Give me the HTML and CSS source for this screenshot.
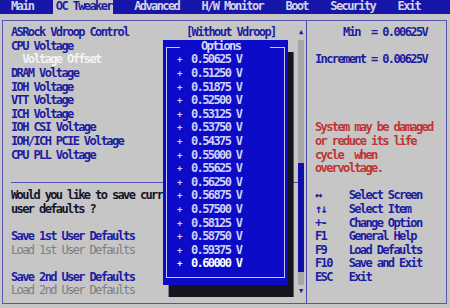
FILE: index.html
```html
<!DOCTYPE html>
<html>
<head>
<meta charset="utf-8">
<link rel="stylesheet" href="styles.css">
</head>
<body>
<div class="screen">
  <nav class="tabs">
    <span class="tab">Main</span>
    <span class="tab active">OC Tweaker</span>
    <span class="tab">Advanced</span>
    <span class="tab">H/W Monitor</span>
    <span class="tab">Boot</span>
    <span class="tab">Security</span>
    <span class="tab">Exit</span>
  </nav>
  <div class="frame">
    <div class="left">
      <div class="list">
        <div class="row item"><span class="label">ASRock Vdroop Control</span><span>[Without Vdroop]</span></div>
        <div class="row item">CPU Voltage</div>
        <div class="row sel">  Voltage Offset</div>
        <div class="row item">DRAM Voltage</div>
        <div class="row item">IOH Voltage</div>
        <div class="row item">VTT Voltage</div>
        <div class="row item">ICH Voltage</div>
        <div class="row item">IOH CSI Voltage</div>
        <div class="row item">IOH/ICH PCIE Voltage</div>
        <div class="row item">CPU PLL Voltage</div>
        <div class="row"></div>
        <div class="row sep"></div>
        <div class="row dark">Would you like to save curr</div>
        <div class="row dark">user defaults ?</div>
        <div class="row"></div>
        <div class="row item">Save 1st User Defaults</div>
        <div class="row dim">Load 1st User Defaults</div>
        <div class="row"></div>
        <div class="row item">Save 2nd User Defaults</div>
        <div class="row dim">Load 2nd User Defaults</div>
      </div>
      <div class="scroll">
        <div class="arrow">&#9650;</div>
        <div class="track"><div class="thumb"></div></div>
        <div class="arrow">&#9660;</div>
      </div>
    </div>
    <div class="right">
      <div class="row item">     Min  = 0.00625V</div>
      <div class="row"></div>
      <div class="row item">Increment = 0.00625V</div>
      <div class="row"></div>
      <div class="row"></div>
      <div class="row"></div>
      <div class="row"></div>
      <div class="row warn">System may be damaged</div>
      <div class="row warn">or reduce its life</div>
      <div class="row warn">cycle  when</div>
      <div class="row warn">overvoltage.</div>
      <div class="row"></div>
      <div class="row item">&#8596;     Select Screen</div>
      <div class="row item">&#8593;&#8595;    Select Item</div>
      <div class="row item">+-    Change Option</div>
      <div class="row item">F1    General Help</div>
      <div class="row item">F9    Load Defaults</div>
      <div class="row item">F10   Save and Exit</div>
      <div class="row item">ESC   Exit</div>
    </div>
  </div>
  <div class="popup">
    <div class="prow"><span class="ptitle">Options</span></div>
    <div class="prow opt"><span class="bul">+</span>0.50625 V</div>
    <div class="prow opt"><span class="bul">+</span>0.51250 V</div>
    <div class="prow opt"><span class="bul">+</span>0.51875 V</div>
    <div class="prow opt"><span class="bul">+</span>0.52500 V</div>
    <div class="prow opt"><span class="bul">+</span>0.53125 V</div>
    <div class="prow opt"><span class="bul">+</span>0.53750 V</div>
    <div class="prow opt"><span class="bul">+</span>0.54375 V</div>
    <div class="prow opt"><span class="bul">+</span>0.55000 V</div>
    <div class="prow opt"><span class="bul">+</span>0.55625 V</div>
    <div class="prow opt"><span class="bul">+</span>0.56250 V</div>
    <div class="prow opt"><span class="bul">+</span>0.56875 V</div>
    <div class="prow opt"><span class="bul">+</span>0.57500 V</div>
    <div class="prow opt"><span class="bul">+</span>0.58125 V</div>
    <div class="prow opt"><span class="bul">+</span>0.58750 V</div>
    <div class="prow opt"><span class="bul">+</span>0.59375 V</div>
    <div class="prow opt cur"><span class="bul">+</span>0.60000 V</div>
    <div class="prow"></div>
  </div>
</div>
</body>
</html>
```
FILE: styles.css
```css
html, body {
  margin: 0;
  padding: 0;
}
body {
  width: 450px;
  height: 308px;
  overflow: hidden;
  background: #c6c6c6;
  font-family: "DejaVu Sans Mono", "Liberation Mono", monospace;
  font-weight: bold;
  font-size: 12px;
  letter-spacing: -1.62px;
}
.screen {
  position: relative;
  width: 450px;
  height: 308px;
}
.tabs {
  display: flex;
  gap: 22.4px;
  height: 13.6px;
  line-height: 13.6px;
  padding-left: 11px;
  background: #1616a8;
  color: #d4d4e4;
  white-space: pre;
}
.tab.active {
  background: #c6c6c6;
  color: #1c1ca0;
  margin: 0 -1px 0 -2.6px;
  padding: 0 1px 0 2.6px;
}
.frame {
  box-sizing: border-box;
  margin: 6px 0 0 2px;
  width: 445px;
  height: 284px;
  border: 1px solid #5656b0;
  display: flex;
}
.left {
  box-sizing: border-box;
  width: 304px;
  border-right: 1px solid #4a4ab0;
  padding: 5.6px 2px 0 8px;
  display: flex;
}
.list {
  flex: 1;
  overflow: hidden;
}
.row {
  height: 13.6px;
  line-height: 13.6px;
  white-space: pre;
  display: flex;
}
.label {
  width: 175px;
}
.item {
  color: #1c1ca0;
}
.sel {
  color: #f4f4f4;
}
.dark {
  color: #14142a;
}
.dim {
  color: #808080;
  font-weight: normal;
}
.warn {
  color: #c03434;
}
.sep {
  position: relative;
}
.sep::after {
  content: "";
  position: absolute;
  left: 0;
  right: 0;
  top: 6.5px;
  border-top: 1px solid #5252b8;
}
.scroll {
  width: 6px;
  display: flex;
  flex-direction: column;
}
.arrow {
  height: 13.6px;
  line-height: 13.6px;
  font-size: 7px;
  letter-spacing: 0;
  color: #1a1aa0;
  text-align: center;
}
.track {
  height: 244.8px;
  background: #a6a6a6;
}
.thumb {
  margin-top: 123px;
  height: 109px;
  background: #1010a6;
}
.right {
  flex: 1;
  padding: 5.6px 0 0 8px;
}
.popup {
  position: absolute;
  left: 163px;
  top: 39.8px;
  width: 125px;
  height: 244.8px;
  background: #0c0cc8;
  box-shadow: 5.6px 12px 0 #15151f;
  color: #d0d0f4;
}
.popup::before {
  content: "";
  position: absolute;
  left: 3px;
  right: 3px;
  top: 6.8px;
  bottom: 6.8px;
  border: 1px solid #c8c8f4;
}
.prow {
  position: relative;
  height: 13.6px;
  line-height: 13.6px;
  white-space: pre;
}
.ptitle {
  position: relative;
  display: inline-block;
  box-sizing: border-box;
  margin-left: 17px;
  width: 90px;
  padding-left: 21px;
  background: #0c0cc8;
  color: #d8d8f8;
}
.opt {
  display: flex;
  padding-left: 14px;
}
.bul {
  width: 14px;
  font-size: 9px;
  letter-spacing: 0;
}
.cur {
  color: #ffffff;
}
```
